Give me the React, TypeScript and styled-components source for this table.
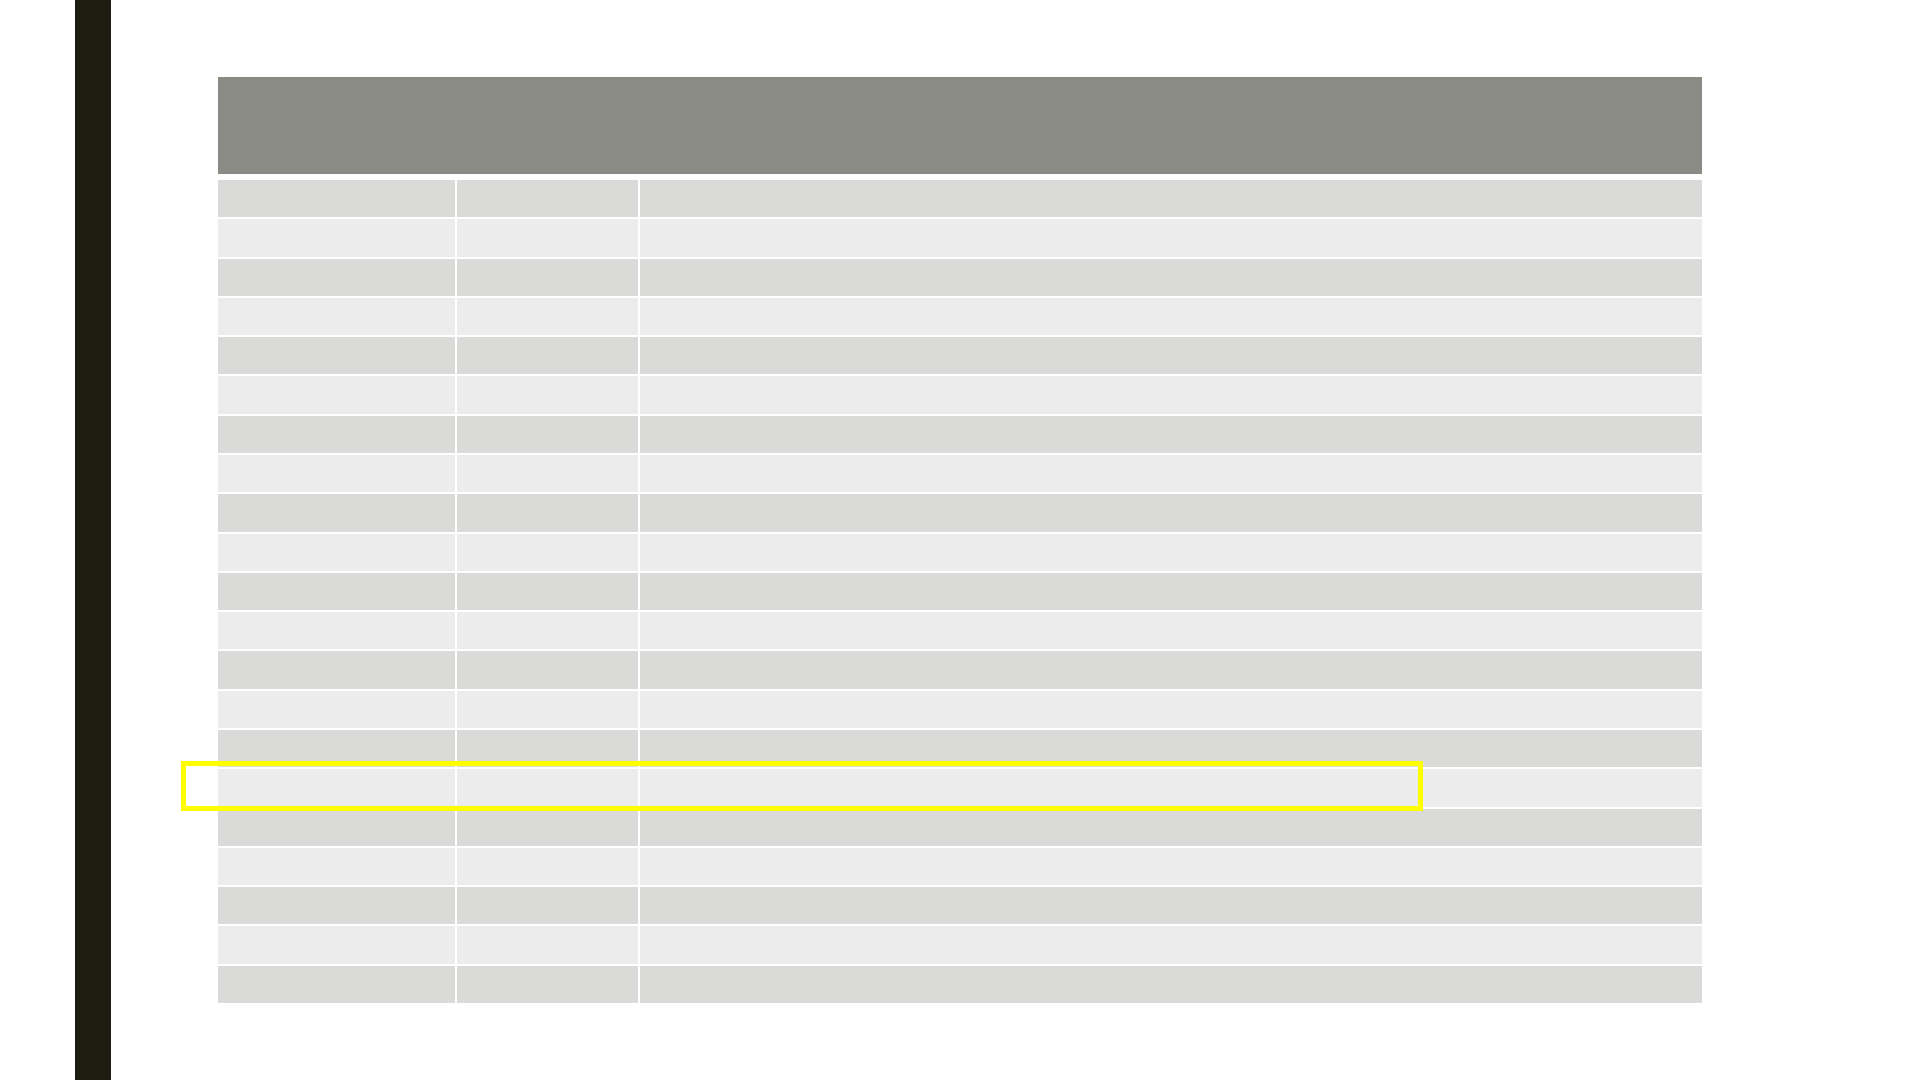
import React from "react";
import styled, { createGlobalStyle } from "styled-components";

const Global = createGlobalStyle`
  html, body { margin: 0; padding: 0; background: #ffffff; }
  body { font-family: "Liberation Sans", Arial, sans-serif; }
`;

const Page = styled.div`
  display: flex;
  width: 1920px;
  height: 1080px;
  padding-left: 75px;
  box-sizing: border-box;
  background: #ffffff;
  overflow: hidden;
`;

const SideBar = styled.div`
  width: 36px;
  height: 1080px;
  background: #1c1c10;
  flex: none;
`;

const Content = styled.div`
  margin-left: 107px;
  padding-top: 77px;
  width: 1484px;
  flex: none;
`;

const TableHeader = styled.div`
  height: 97px;
  background: #8b8b85;
  margin-bottom: 6px;
`;

const TableBody = styled.div`
  position: relative;
  display: grid;
  grid-template-columns: 237px 181px 1fr;
  grid-auto-rows: 1fr;
  column-gap: 2px;
  row-gap: 2px;
  height: 823px;
`;

const Cell = styled.div<{ $dark: boolean }>`
  background: ${(p) => (p.$dark ? "#dadad8" : "#ececec")};
`;

const Highlight = styled.div`
  position: absolute;
  left: -37px;
  top: 581px;
  width: 1242px;
  height: 50px;
  box-sizing: border-box;
  border: 5px solid #ffff00;
  pointer-events: none;
`;

const ROWS = 21;

export default function App() {
  const rows = Array.from({ length: ROWS }, (_, i) => i);
  return (
    <>
      <Global />
      <Page>
        <SideBar />
        <Content>
          <TableHeader />
          <TableBody>
            {rows.map((r) =>
              [0, 1, 2].map((c) => <Cell key={`${r}-${c}`} $dark={r % 2 === 0} />)
            )}
            <Highlight />
          </TableBody>
        </Content>
      </Page>
    </>
  );
}
